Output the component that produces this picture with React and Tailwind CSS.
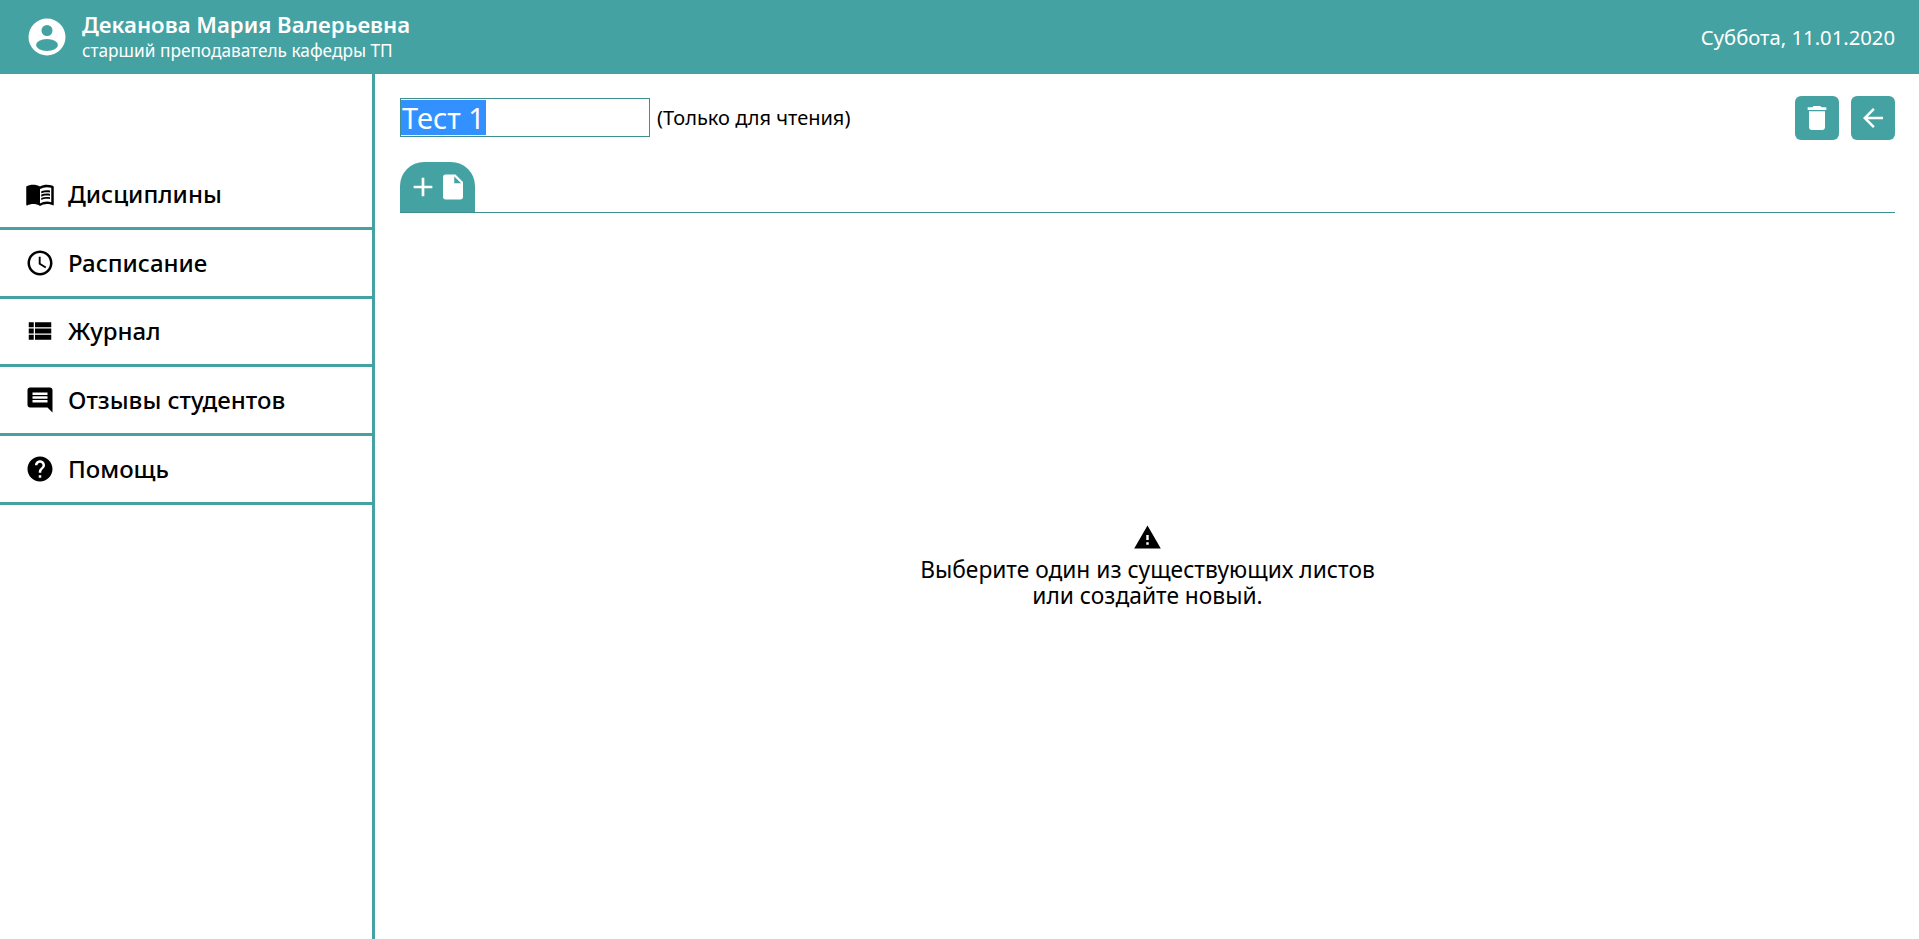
import React from 'react';
import {
  MdMenuBook,
  MdAccessTime,
  MdViewList,
  MdComment,
  MdHelp,
  MdWarning,
  MdAdd,
  MdInsertDriveFile,
  MdDelete,
  MdArrowBack,
} from 'react-icons/md';

const menu = [
  { label: 'Дисциплины', icon: <MdMenuBook size={30} /> },
  { label: 'Расписание', icon: <MdAccessTime size={30} /> },
  { label: 'Журнал', icon: <MdViewList size={30} /> },
  { label: 'Отзывы студентов', icon: <MdComment size={30} /> },
  { label: 'Помощь', icon: <MdHelp size={30} /> },
];

const UserIcon = () => (
  <svg width="38" height="38" viewBox="0 0 38 38">
    <circle cx="19" cy="19" r="18.5" fill="#fff" />
    <circle cx="19" cy="12.5" r="5.5" fill="#45a2a3" />
    <ellipse cx="19" cy="27" rx="11" ry="6" fill="#45a2a3" />
  </svg>
);

const App = () => {
  return (
    <div className="flex flex-col h-screen bg-white text-black font-['Noto_Sans','Open_Sans',sans-serif]">
      {/* Header */}
      <header className="h-[74px] shrink-0 bg-[#45a2a3] text-white flex items-center justify-between pl-[28px] pr-[24px]">
        <div className="flex items-center gap-[16px]">
          <UserIcon />
          <div>
            <div className="text-[22.2px] leading-[26px] font-semibold">Деканова Мария Валерьевна</div>
            <div className="text-[17.25px] leading-[22px] mt-[2px]">старший преподаватель кафедры ТП</div>
          </div>
        </div>
        <div className="text-[20.25px]">Суббота, 11.01.2020</div>
      </header>

      <div className="flex-1 flex min-h-0">
        {/* Sidebar */}
        <aside className="w-[375px] shrink-0 border-r-[3px] border-[#45a2a3] pt-[87px]">
          {menu.map((item) => (
            <div
              key={item.label}
              className="h-[68.8px] border-b-[3px] border-[#45a2a3] flex items-center pl-[25px] gap-[13px]"
            >
              <span className="w-[30px] flex justify-center">{item.icon}</span>
              <span className="text-[24px] font-medium">{item.label}</span>
            </div>
          ))}
        </aside>

        {/* Main */}
        <main className="flex-1 flex flex-col pl-[25px] pr-[24px] pt-[22px]">
          <div className="flex items-center justify-between">
            <div className="flex items-center gap-[7px]">
              <div className="w-[250px] h-[39px] mb-[1px] border border-[#3f9091] flex items-center">
                <span className="bg-[#3390ff] text-white text-[29px] leading-[35px] px-[1px]">Тест 1</span>
              </div>
              <span className="text-[20px]">(Только для чтения)</span>
            </div>
            <div className="flex gap-[12px]">
              <button className="w-[44px] h-[44px] rounded-[6px] bg-[#45a2a3] text-white flex items-center justify-center">
                <MdDelete size={32} />
              </button>
              <button className="w-[44px] h-[44px] rounded-[6px] bg-[#45a2a3] text-white flex items-center justify-center">
                <MdArrowBack size={30} />
              </button>
            </div>
          </div>

          <div className="mt-[22px] border-b border-[#3f9091] flex">
            <div className="w-[75px] h-[50px] bg-[#45a2a3] text-white rounded-t-[24px] flex items-center justify-center">
              <MdAdd size={32} />
              <MdInsertDriveFile size={30} className="-ml-[1px]" />
            </div>
          </div>

          <div className="flex-1 flex flex-col items-center justify-center pb-[20px] text-[22.75px] leading-[26px]">
            <MdWarning size={29} />
            <div className="text-center mt-[5px]">
              Выберите один из существующих листов
              <br />
              или создайте новый.
            </div>
          </div>
        </main>
      </div>
    </div>
  );
};

export default App;
